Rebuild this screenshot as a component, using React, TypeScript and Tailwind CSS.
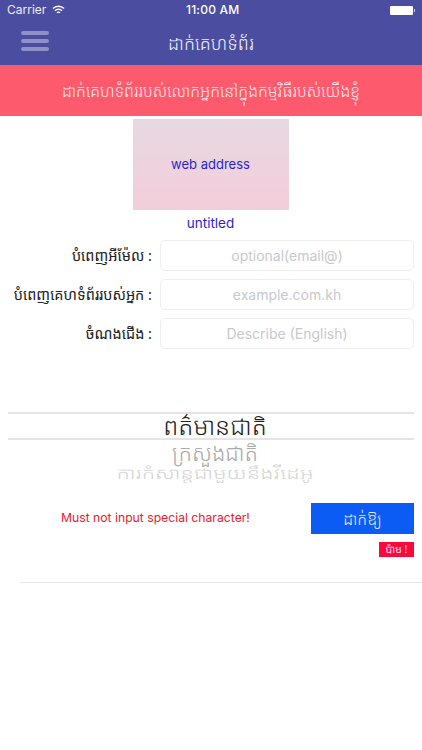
const KHMER = "font-['Noto_Sans_Khmer','Khmer_OS','Noto_Sans','Liberation_Sans',sans-serif]";

function Field({ label, placeholder }: { label: string; placeholder: string }) {
  return (
    <div className="flex items-center h-[31px]">
      <div className="w-[152px] text-right text-[14.5px] leading-none text-[#222] whitespace-nowrap">{label}</div>
      <div className="ml-[8px] w-[254px] h-[31px] rounded-[5px] border border-[#eeeeee] bg-white flex items-center justify-center text-[14px] text-[#c8c8cd] font-['Inter',sans-serif]">
        {placeholder}
      </div>
    </div>
  );
}

export default function App() {
  return (
    <div className={`w-[422px] h-[750px] bg-white overflow-hidden flex flex-col ${KHMER}`}>
      {/* status + nav */}
      <div className="h-[65px] bg-[#4a4da0] text-white flex flex-col">
        <div className="h-[20px] flex items-center px-[7px] text-[12px] font-['Inter',sans-serif]">
          <div className="w-[179px] flex items-center gap-[6px] text-[#eee]">
            Carrier
            <svg width="13" height="10" viewBox="0 0 14 10" fill="none" stroke="white" strokeWidth="1.5">
              <path d="M1 3.5a8.5 8.5 0 0 1 12 0" />
              <path d="M3.2 5.8a5.3 5.3 0 0 1 7.6 0" />
              <path d="M5.4 8a2.2 2.2 0 0 1 3.2 0" />
            </svg>
          </div>
          <div className="font-medium tracking-[0.2px]">11:00 AM</div>
          <div className="ml-auto flex items-center">
            <div className="w-[23px] h-[9px] bg-white rounded-[1px]" />
            <div className="w-[1px] h-[3px] bg-white/70 ml-[1px]" />
          </div>
        </div>
        <div className="flex-1 flex items-center relative">
          <div className="absolute left-[21px] top-[11px] flex flex-col gap-[4px]">
            <div className="w-[28px] h-[4px] rounded-full bg-[#8f91c6]" />
            <div className="w-[28px] h-[4px] rounded-full bg-[#8f91c6]" />
            <div className="w-[28px] h-[4px] rounded-full bg-[#8f91c6]" />
          </div>
          <div className="w-full text-center text-[18px] font-light leading-none text-[#f0f0f8]">ដាក់គេហទំព័រ</div>
        </div>
      </div>

      {/* banner */}
      <div className="h-[51px] bg-[#fe5a6e] flex items-center justify-center text-[16px] font-light leading-none text-[#fde6e9] whitespace-nowrap">
        ដាក់គេហទំព័ររបស់លោកអ្នកនៅក្នុងកម្មវិធីរបស់យើងខ្ញុំ
      </div>

      {/* preview */}
      <div className="mt-[3px] self-center w-[156px] h-[91px] ml-[-1px] bg-gradient-to-b from-[#e6d9e2] to-[#f3cdda] flex items-center justify-center text-[13px] text-[#2a1fd0] font-['Inter',sans-serif]">
        web address
      </div>
      <div className="mt-[4px] h-[18px] flex items-center justify-center ml-[-1px] text-[13.5px] text-[#2a1fd0] font-['Inter',sans-serif]">
        untitled
      </div>

      {/* form */}
      <div className="mt-[8px] flex flex-col gap-[8px]">
        <Field label="បំពេញអីម៉ែល :" placeholder="optional(email@)" />
        <Field label="បំពេញគេហទំព័ររបស់អ្នក :" placeholder="example.com.kh" />
        <Field label="ចំណងជើង :" placeholder="Describe (English)" />
      </div>

      {/* picker */}
      <div className="mt-[63px] mx-[8px] flex flex-col items-center">
        <div className="w-full h-[28px] pl-[8px] border-y-2 border-[#e4e4e4] flex items-center justify-center text-[24.5px] font-light leading-none text-[#222] whitespace-nowrap">
          ពត៌មានជាតិ
        </div>
        <div className="h-[23px] pl-[8px] flex items-center text-[22px] font-light leading-none text-[#aaa] whitespace-nowrap">ក្រសួងជាតិ</div>
        <div className="h-[19px] pl-[8px] flex items-center text-[21.8px] font-light leading-none text-[#d4d4d4] whitespace-nowrap scale-y-[0.72]">ការកំសាន្តជាមួយនឹងវីដេអូ</div>
      </div>

      {/* submit */}
      <div className="mt-[21px] flex items-center">
        <div className="w-[311px] pl-[61px] text-[12.2px] text-[#e8202f] font-['Inter',sans-serif] whitespace-nowrap">
          Must not input special character!
        </div>
        <div className="w-[103px] h-[31px] bg-[#0a5cf5] flex items-center justify-center text-[16px] font-light leading-none text-[#eef]">ដាក់ឱ្យ</div>
      </div>
      <div className="mt-[8px] mr-[8px] self-end w-[35px] h-[15px] bg-[#fa0a3c] flex items-center justify-center text-[10.5px] leading-none text-[#fde]">ប៉ាម !</div>

      <div className="mt-[25px] ml-[20px] h-[1px] bg-[#e8e8e8]" />
    </div>
  );
}
